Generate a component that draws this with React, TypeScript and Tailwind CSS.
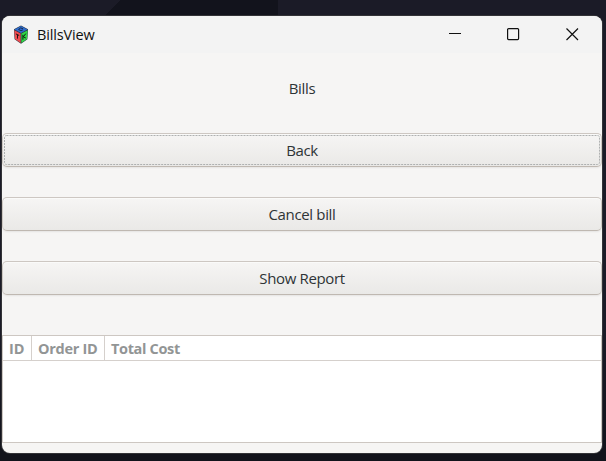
import type { ReactNode } from "react";

function GtkLogo() {
  return (
    <svg width="16" height="20" viewBox="0 0 16 20" className="block">
      <path d="M8 0.6 L15 4.2 L14.4 14.2 L8 18.8 L1.6 14.2 L1 4.2 Z" fill="#2a3440" />
      <path d="M8 1 L14.6 4.5 L8 8 L1.4 4.5 Z" fill="#2f6ccb" />
      <path d="M1.4 5.2 L7.6 8.5 V17.9 L2 13.9 Z" fill="#f04b50" />
      <path d="M14.6 5.2 L8.4 8.5 V17.9 L14 13.9 Z" fill="#2fd746" />
      <path d="M10 3.6 L7.4 3 L5.6 4.5 L8 5.7 L9.9 4.9" fill="none" stroke="#101c38" strokeWidth="0.8" />
      <path d="M2.9 8.9 L6.2 10.5 M4.5 9.7 V13.6" fill="none" stroke="#241214" strokeWidth="1" />
      <path d="M9.9 9.8 V14.7 M12.8 8.6 L10.3 11.8 L12.8 13" fill="none" stroke="#08250e" strokeWidth="1" />
    </svg>
  );
}

function TitleBar() {
  return (
    <header className="flex h-[37px] shrink-0 items-center bg-[#f3f3f3] pl-[11px]">
      <GtkLogo />
      <span className="ml-2 w-[60px] whitespace-nowrap text-[14.5px] tracking-[-0.15px] text-[#111]">BillsView</span>
      <div className="ml-auto flex items-center pr-[23px] text-[#111]">
        <svg width="13" height="13" viewBox="0 0 13 13" fill="none" stroke="currentColor" className="mr-[45px]">
          <path d="M0 5.5H12" />
        </svg>
        <svg width="13" height="13" viewBox="0 0 13 13" fill="none" stroke="currentColor" strokeWidth="1.2" className="mr-[46px]">
          <rect x="0.6" y="0.6" width="11" height="11" rx="1" />
        </svg>
        <svg width="13" height="13" viewBox="0 0 13 13" fill="none" stroke="currentColor" strokeWidth="1.2">
          <path d="M0.5 0.5 L12 12 M12 0.5 L0.5 12" />
        </svg>
      </div>
    </header>
  );
}

function Button({ children, focused = false }: { children: ReactNode; focused?: boolean }) {
  return (
    <button className="block h-[34px] w-full rounded-[5px] border border-[#cdc7c2] border-b-[#bfb8b1] bg-linear-to-b from-[#f6f5f4] to-[#eae9e7] p-px shadow-[inset_0_1px_#fafaf9,0_1px_2px_rgba(0,0,0,0.07)]">
      <span className="relative flex h-full items-center justify-center">
        {focused && (
          <svg className="absolute inset-0 h-full w-full" fill="none">
            <rect x="0.5" y="0.5" width="595" height="29" rx="2" stroke="#aeb0b0" strokeDasharray="2 1" />
          </svg>
        )}
        {children}
      </span>
    </button>
  );
}

export default function App() {
  return (
    <main className="h-[461px] w-[606px] overflow-hidden bg-[linear-gradient(135deg,#1b1b27_0_85px,#12131c_85px),linear-gradient(180deg,#1b1b27_0_70%,#12131b_98%)] bg-[length:278px_16px,100%_100%] bg-no-repeat pl-[2px] pt-[16px] font-['Open_Sans','Noto_Sans',sans-serif] text-[#2e3436]">
      <section className="flex h-[437px] w-[600px] flex-col overflow-hidden rounded-[8px] bg-[#f6f5f4] shadow-[0_0_0_1px_#333337]">
        <TitleBar />
        <h1 className="mt-[24px] h-[22px] text-center text-[15px] leading-[22px] tracking-[-0.3px]">Bills</h1>
        <div className="mt-[34px] flex flex-col gap-[30px] text-[15px] leading-[20px] tracking-[-0.35px]">
          <Button focused>Back</Button>
          <Button>Cancel bill</Button>
          <Button>Show Report</Button>
        </div>
        <div className="mt-[40px] h-[108px] shrink-0 border border-[#cdc7c2] bg-white">
          <div className="flex h-[25px] items-center border-b border-[#d5d0cc] text-[14.5px] font-bold text-[#929595]">
            <div className="flex h-full w-[29px] items-center border-r border-[#d5d0cc] pl-[6px] pt-[2px]">ID</div>
            <div className="flex h-full w-[73px] items-center whitespace-nowrap border-r border-[#d5d0cc] pl-[6px] pt-[2px] tracking-[-0.3px]">Order ID</div>
            <div className="pl-[6px] pt-[2px] tracking-[-0.35px]">Total Cost</div>
          </div>
        </div>
      </section>
    </main>
  );
}
